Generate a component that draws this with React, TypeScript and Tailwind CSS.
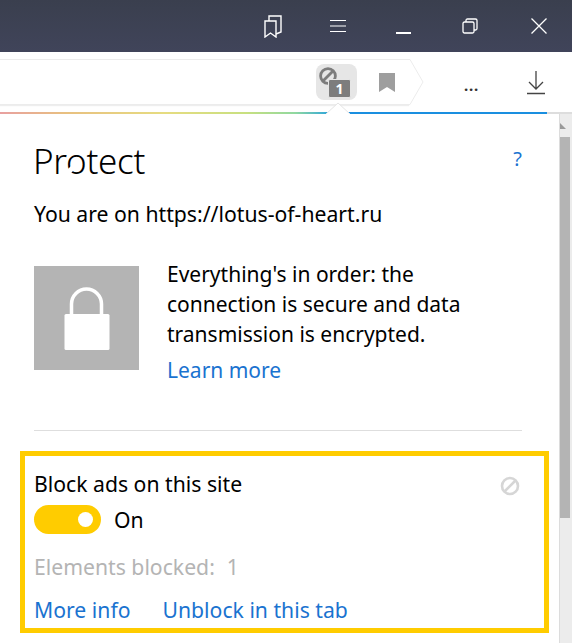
function Rainbow() {
  return (
    <div className="flex h-[2px]">
      <div className="w-[547px] bg-[linear-gradient(90deg,#e8a0a0_0%,#e8c080_12%,#e6dc80_30%,#c8e080_45%,#90d8a0_54%,#40b0d0_59%,#1a8fe0_62%,#1a8fe0_100%)]" />
      <div className="flex-1 bg-[#dddddd]" />
    </div>
  );
}

export default function App() {
  return (
    <div className="relative w-[572px] h-[643px] overflow-hidden bg-white text-black font-['Noto_Sans',sans-serif]">
      <div className="h-[52px] bg-[linear-gradient(180deg,#3a3f4e,#40445a)] flex justify-end items-center">
        <svg width="20" height="24" viewBox="0 0 20 24" fill="none" stroke="white" strokeWidth="1.4" className="mr-[47px]">
          <path d="M2 7h11v16l-5.500-4L2 23z" />
          <path d="M6 7V2h12v16l-5 2" />
        </svg>
        <svg width="16" height="14" viewBox="0 0 16 14" stroke="white" strokeWidth="1.2" className="mr-[50px]">
          <path d="M0 1.500h16M0 7h16M0 12.500h16" />
        </svg>
        <div className="h-[1.5px] w-[15px] bg-white mt-[14px] mr-[51px]" />
        <svg width="16" height="16" viewBox="0 0 16 16" fill="none" stroke="white" strokeWidth="1.3" className="mr-[53px]">
          <rect x="1" y="4" width="11" height="11" rx="1.5" />
          <path d="M4 4V2.500Q4 1 5.500 1h8Q15 1 15 2.500v8q0 1.500-1.500 1.500H12" />
        </svg>
        <svg width="16" height="16" viewBox="0 0 16 16" stroke="white" strokeWidth="1.3" className="mr-[25px]">
          <path d="M0.500 0.500l15 15M15.500 0.500l-15 15" />
        </svg>
      </div>

      <div className="h-[60px] bg-white rounded-tr-[12px] flex items-start">
        <div className="relative mt-[7px] w-[409px] h-[46px] bg-white border-y border-[#ececec] shadow-[0_1px_1px_#eeeeee] flex items-center justify-end">
          <div className="w-[41px] h-[36px] rounded-[8px] bg-[#e6e6e6] relative mr-[52px]">
            <svg width="18" height="18" viewBox="0 0 18 18" fill="none" stroke="#7d7d7d" strokeWidth="2.800" className="absolute left-[3px] top-[3px]">
              <circle cx="9" cy="9" r="7.400" />
              <path d="M4 14L14 4" />
            </svg>
            <div className="absolute left-[12px] top-[15px] w-[21px] h-[17px] rounded-[2px] bg-[#7d7d7d] border border-[#e6e6e6] box-content text-white text-[14px] leading-[17px] font-bold text-center">1</div>
          </div>
          <svg width="16" height="19" viewBox="0 0 16 19" className="absolute left-[379px] top-[13px]" fill="#9e9e9e">
            <path d="M0 0h16v19l-8-5-8 5z" />
          </svg>
          <svg width="16" height="46" viewBox="0 0 16 46" fill="white" stroke="#ececec" className="absolute -right-[15px] -top-px">
            <path d="M0 0.500h2L15 23 2 45.500H0" />
          </svg>
        </div>
        <div className="ml-[55px] mt-[26px] text-[#333] text-[15px] leading-none font-bold tracking-[0.8px]">...</div>
        <svg width="20" height="24" viewBox="0 0 20 24" fill="none" stroke="#444" strokeWidth="1.300" className="ml-[47px] mt-[19px]">
          <path d="M10 0v18M3 11l7 7 7-7M1 22.500h18" />
        </svg>
      </div>

      <Rainbow />

      <div className="absolute left-0 top-[114px] flex w-[572px] h-[529px]">
        <div className="relative w-[560px] border-r border-[#dcdcdc] bg-white pt-[28px]">
          <svg width="24" height="12" viewBox="0 0 24 12" className="absolute left-[326px] -top-[12px]" fill="white" stroke="#e4e4e4">
            <path d="M0 12L12 1l12 11" />
          </svg>
          <div className="flex justify-between pl-[33px] pr-[37px] items-start">
            <div className="relative text-[35px] leading-[38px] tracking-[-0.3px] font-light">
              Protect
              <div className="absolute left-[35px] top-[24px] w-[5px] h-[8px] bg-white rotate-45" />
            </div>
            <div className="text-[#1a73d0] text-[20px] leading-[34px]">?</div>
          </div>
          <div className="pl-[34px] mt-[20px] text-[21.2px] leading-[28px]">You are on https://lotus-of-heart.ru</div>
          <div className="flex pl-[34px] mt-[38px]">
            <div className="w-[105px] h-[104px] bg-[#b4b4b4] flex items-center justify-center">
              <svg width="46" height="63" viewBox="0 0 46 63" fill="none">
                <path d="M7.500 30V17a15 15 0 0 1 30 0v13" stroke="white" strokeWidth="3.500" />
                <rect x="0.500" y="27" width="45" height="36" rx="1.500" fill="white" />
              </svg>
            </div>
            <div className="ml-[28px] text-[21px] leading-[30px] -mt-[7px]">
              <div>Everything's in order: the</div>
              <div>connection is secure and data</div>
              <div>transmission is encrypted.</div>
              <div className="text-[#1a73d0] mt-[6px]">Learn more</div>
            </div>
          </div>
          <div className="ml-[34px] mr-[37px] mt-[45px] h-px bg-[#dedede]" />
          <div className="relative ml-[20px] mr-[10px] mt-[20px] h-[182px] border-[5px] border-[#ffcc00] pl-[9px] pt-[14px]">
            <svg width="20" height="20" viewBox="0 0 20 20" fill="none" stroke="#d6d6d6" strokeWidth="2.600" className="absolute right-[24px] top-[20px]">
              <circle cx="10" cy="10" r="8" />
              <path d="M5 15L15 5" />
            </svg>
            <div className="text-[21.2px] leading-[28px]">Block ads on this site</div>
            <div className="flex items-center mt-[7px]">
              <div className="w-[67px] h-[29px] rounded-full bg-[#ffcc00] flex items-center justify-end pr-[8px]">
                <div className="w-[15px] h-[15px] rounded-full bg-white" />
              </div>
              <span className="ml-[13px] text-[21.2px] leading-[28px]">On</span>
            </div>
            <div className="mt-[19px] text-[21.2px] leading-[28px] text-[#b4b4b4] flex">
              <span>Elements blocked:</span>
              <span className="ml-[12px]">1</span>
            </div>
            <div className="mt-[15px] text-[21.2px] leading-[28px] text-[#1a73d0] flex">
              <span>More info</span>
              <span className="ml-[32px]">Unblock in this tab</span>
            </div>
          </div>
        </div>
        <div className="w-[12px] bg-[#ececec] flex flex-col">
          <div className="h-[23px] flex items-center">
            <svg width="6" height="6" viewBox="0 0 6 6" fill="#9a9a9a">
              <path d="M0 6V0l6 6z" />
            </svg>
          </div>
          <div className="h-[381px] w-[10px] bg-[#b4b4b4]" />
        </div>
      </div>
    </div>
  );
}
